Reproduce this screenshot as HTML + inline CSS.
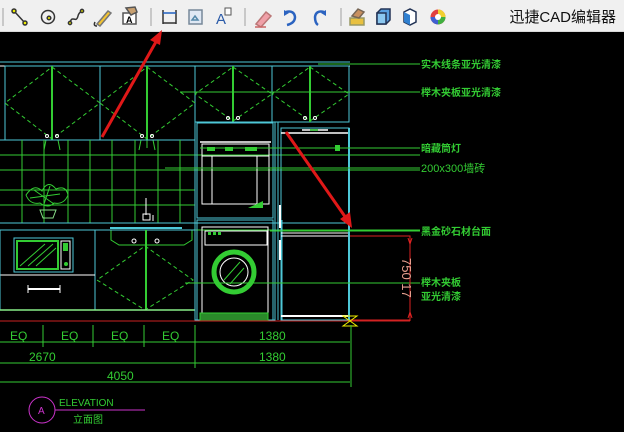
<!DOCTYPE html>
<html><head><meta charset="utf-8"><style>
html,body{margin:0;padding:0;width:624px;height:432px;overflow:hidden;background:#000}
.tb{position:absolute;left:0;top:0;width:624px;height:31px;background:#f0f0f0;border-bottom:1px solid #d8d8d8}
.title{position:absolute;right:8px;top:6px;font:15px "Liberation Sans","Noto Sans CJK SC",sans-serif;color:#111}
svg{position:absolute;left:0;top:0}
</style></head><body>
<div class="tb"></div>
<div class="title">迅捷CAD编辑器</div>
<svg width="624" height="432" viewBox="0 0 624 432" font-family="Liberation Sans, Noto Sans CJK SC, sans-serif">
<g stroke-width="1.5" fill="none">
<line x1="3" y1="8" x2="3" y2="26" stroke="#bbb"/>
<line x1="14" y1="11" x2="25" y2="23" stroke="#333"/><circle cx="14" cy="11" r="2" stroke="#333" fill="#ee0"/><circle cx="25" cy="23" r="2" stroke="#333" fill="#ee0"/>
<circle cx="48" cy="17" r="6.5" stroke="#333"/><circle cx="49" cy="18" r="1.8" fill="#ee0" stroke="#333"/>
<path d="M70 23 C72 14 76 24 78 16 C79 12 81 12 82 11" stroke="#333"/><circle cx="70" cy="23" r="1.6" fill="#ee0" stroke="#333"/><circle cx="82" cy="11" r="1.6" fill="#ee0" stroke="#333"/>
<path d="M97 24 L108 11 L111 13 L100 26 Z" fill="#f4c430" stroke="#777"/><path d="M95 22 q-2 4 2 4" stroke="#333"/>
<rect x="123" y="13" width="13" height="11" fill="#fff" stroke="#555"/><path d="M126 8 l9 -1 l2 5 l-6 3z" fill="#c8a070" stroke="#555"/><text x="126" y="23" font-size="9" fill="#000" stroke="none" font-weight="bold">A</text>
<line x1="151" y1="8" x2="151" y2="26" stroke="#bbb"/>
<line x1="163" y1="10" x2="163" y2="24" stroke="#333"/><line x1="176" y1="10" x2="176" y2="24" stroke="#333"/><line x1="163" y1="13" x2="176" y2="13" stroke="#2060c0"/><line x1="163" y1="23" x2="176" y2="23" stroke="#333"/>
<rect x="189" y="10" width="13" height="14" fill="#dfe8f4" stroke="#789"/><path d="M192 20 l6 0 l-3 -4z" stroke="#58a"/>
<text x="216" y="24" font-size="15" fill="#2a5aa8" stroke="none">A</text><rect x="225" y="8" width="6" height="7" fill="#fff" stroke="#555" stroke-width="1"/>
<line x1="245" y1="8" x2="245" y2="26" stroke="#bbb"/>
<path d="M256 24 L266 12 L271 16 L261 27 Z" fill="#f0a0a8" stroke="#b77"/><line x1="255" y1="27" x2="266" y2="27" stroke="#c66"/>
<path d="M286 12 q8 -2 9 5 q0 6 -8 8" stroke="#2b63c0" stroke-width="2.5"/><path d="M284 10 l0 6 l5 -3z" fill="#2b63c0" stroke="none"/>
<path d="M324 12 q-8 -2 -9 5 q0 6 3 8" stroke="#2b63c0" stroke-width="2.5"/><path d="M326 10 l0 6 l-5 -3z" fill="#2b63c0" stroke="none"/>
<line x1="341" y1="8" x2="341" y2="26" stroke="#bbb"/>
<rect x="350" y="18" width="14" height="7" fill="#e8c040" stroke="#996"/><path d="M352 16 l6 -7 l6 3 l-5 6z" fill="#c89060" stroke="#765"/>
<path d="M377 13 l4 -4 h9 v11 l-4 4 h-9z" fill="#5aa0e0" stroke="#235"/><rect x="377" y="13" width="9" height="11" fill="#8cc8f0" stroke="#235"/>
<path d="M404 12 l6 -3 l6 3 v10 l-6 3 l-6 -3z" fill="#fff" stroke="#235"/><path d="M404 12 l6 3 v10 l-6 -3z" fill="#3080d0"/>
<circle cx="438" cy="17" r="7.5" fill="#e04040" stroke="none"/><path d="M438 17 L438 9.5 A7.5 7.5 0 0 1 445.5 17z" fill="#f0d030" stroke="none"/><path d="M438 17 L445.5 17 A7.5 7.5 0 0 1 438 24.5z" fill="#40b040" stroke="none"/><path d="M438 17 L438 24.5 A7.5 7.5 0 0 1 430.5 17z" fill="#4060d0" stroke="none"/><circle cx="438" cy="17" r="3" fill="#fff" stroke="none"/>
</g>

<g fill="none" stroke-width="1">
<line x1="0" y1="62" x2="350" y2="62" stroke="#4ec8d8"/>
<line x1="0" y1="66" x2="350" y2="66" stroke="#fff"/>
<line x1="318" y1="64" x2="420" y2="64" stroke="#3c3"/>
<rect x="5" y="66" width="95" height="74" stroke="#4ec8d8"/>
<rect x="100" y="66" width="95" height="74" stroke="#4ec8d8"/>
<rect x="195" y="66" width="77" height="56" stroke="#4ec8d8"/>
<rect x="272" y="66" width="77" height="56" stroke="#4ec8d8"/>
<g stroke="#3c3" stroke-dasharray="4 3">
<path d="M52 67 L100 103 L52 139 L5 103 Z"/><path d="M147 67 L195 103 L147 139 L100 103 Z"/>
<path d="M233 67 L272 94 L233 121 L195 94 Z"/><path d="M310 67 L349 94 L310 121 L272 94 Z"/>
</g>
<g stroke="#3c3" stroke-width="2"><line x1="52" y1="66" x2="52" y2="140"/><line x1="147" y1="66" x2="147" y2="140"/><line x1="233" y1="66" x2="233" y2="122"/><line x1="310" y1="66" x2="310" y2="122"/></g>
<line x1="180" y1="92" x2="420" y2="92" stroke="#3c3"/>
<g stroke="#fff"><circle cx="47" cy="136" r="1.5"/><circle cx="57" cy="136" r="1.5"/><circle cx="142" cy="136" r="1.5"/><circle cx="152" cy="136" r="1.5"/><circle cx="228" cy="118" r="1.5"/><circle cx="238" cy="118" r="1.5"/><circle cx="305" cy="118" r="1.5"/><circle cx="315" cy="118" r="1.5"/></g>
<g stroke="#3c3"><path d="M46 140 l-2 10 M58 140 l2 10 M141 140 l-2 10 M153 140 l2 10 M147 140 v8"/></g>
<line x1="0" y1="140" x2="195" y2="140" stroke="#4ec8d8"/>
<g stroke="#3c3">
<line x1="0" y1="155" x2="420" y2="155"/><line x1="0" y1="170" x2="420" y2="170"/><line x1="0" y1="190" x2="195" y2="190"/><line x1="0" y1="205" x2="195" y2="205"/>
<line x1="22" y1="140" x2="22" y2="223"/><line x1="44" y1="140" x2="44" y2="223"/><line x1="68" y1="140" x2="68" y2="223"/><line x1="90" y1="140" x2="90" y2="223"/><line x1="112" y1="140" x2="112" y2="223"/><line x1="135" y1="140" x2="135" y2="223"/><line x1="158" y1="140" x2="158" y2="223"/><line x1="180" y1="140" x2="180" y2="223"/>
</g>
<g stroke="#3c3"><path d="M26 195 q8 -12 16 -4 q6 -12 14 -2 q10 -4 12 6 q-4 10 -14 8 q-6 6 -14 0 q-10 2 -14 -8z"/><path d="M30 198 l30 -4 M34 190 l20 14 M50 186 l-6 18"/><path d="M40 210 h16 l-3 8 h-10z" stroke="#8d8"/></g>
<line x1="0" y1="223" x2="350" y2="223" stroke="#4ec8d8"/>
<line x1="0" y1="230" x2="195" y2="230" stroke="#4ec8d8"/>
<line x1="110" y1="228" x2="182" y2="228" stroke="#4ec8d8" stroke-width="2"/>
<line x1="170" y1="230" x2="420" y2="230" stroke="#3c3"/>
<g stroke="#fff"><line x1="146" y1="198" x2="146" y2="215"/><rect x="143" y="214" width="7" height="6"/><line x1="153" y1="215" x2="153" y2="221"/></g>
<path d="M111 230 v10 l8 5 h65 l8 -5 v-10" stroke="#3c3"/>
<g stroke="#fff"><circle cx="134" cy="241" r="2"/><circle cx="157" cy="241" r="2"/></g>
<line x1="95" y1="230" x2="95" y2="310" stroke="#4ec8d8"/>
<line x1="0" y1="275" x2="95" y2="275" stroke="#fff"/>
<rect x="0" y="230" width="195" height="80" stroke="#4ec8d8"/>
<line x1="28" y1="289" x2="60" y2="289" stroke="#fff" stroke-width="2"/><path d="M28 285 v8 M60 285 v8" stroke="#fff"/>
<rect x="14" y="238" width="59" height="34" stroke="#4ec8d8"/>
<rect x="17" y="241" width="41" height="28" stroke="#3c3" stroke-width="2"/>
<g stroke="#3c3"><path d="M20 266 l25 -22 M28 266 l25 -22 M36 266 l20 -18"/></g>
<rect x="61" y="241" width="9" height="28" stroke="#fff"/><rect x="63" y="243" width="5" height="8" fill="#3c3" stroke="none"/><circle cx="66" cy="264" r="2" fill="#3c3" stroke="none"/>
<path d="M145 246 L193 280 L145 310 L97 280 Z" stroke="#3c3" stroke-dasharray="4 3"/>
<line x1="146" y1="230" x2="146" y2="310" stroke="#3c3" stroke-width="2"/>
<line x1="0" y1="310" x2="195" y2="310" stroke="#8e8" stroke-width="1.5"/>
<rect x="195" y="122" width="80" height="198" stroke="#4ec8d8"/>
<rect x="197" y="123" width="76" height="95" stroke="#4ec8d8"/>
<line x1="200" y1="142" x2="271" y2="142" stroke="#fff" stroke-width="1.5"/>
<rect x="202" y="144" width="67" height="12" stroke="#fff"/>
<rect x="202" y="144" width="67" height="60" stroke="#fff"/>
<rect x="212" y="156" width="45" height="48" stroke="#fff"/>
<g fill="#3c3" stroke="none"><rect x="207" y="147" width="8" height="4"/><rect x="225" y="147" width="8" height="4"/><rect x="245" y="147" width="12" height="4"/><path d="M248 208 l15 -7 v7z"/></g>
<rect x="197" y="220" width="76" height="100" stroke="#4ec8d8"/>
<rect x="202" y="227" width="66" height="88" stroke="#fff"/>
<path d="M205 231 h62 v14 h-62z" stroke="#fff"/>
<g fill="#3c3" stroke="none"><rect x="208" y="232" width="3" height="3"/><rect x="213" y="232" width="3" height="3"/><rect x="218" y="232" width="3" height="3"/></g>
<circle cx="234" cy="272" r="20" stroke="#3c3" stroke-width="5"/>
<circle cx="234" cy="272" r="14" stroke="#fff"/>
<path d="M224 280 l16 -18 M230 284 l14 -16" stroke="#3c3"/>
<rect x="200" y="313" width="68" height="8" fill="#2a8a2a" stroke="#3c3"/>
<line x1="278" y1="122" x2="278" y2="320" stroke="#4ec8d8"/>
<line x1="282" y1="220" x2="282" y2="320" stroke="#4ec8d8"/>
<rect x="281" y="128" width="68" height="192" stroke="#4ec8d8"/>
<line x1="281" y1="133" x2="349" y2="133" stroke="#fff" stroke-width="1.5"/>
<line x1="302" y1="130" x2="328" y2="130" stroke="#fff" stroke-width="1.5"/><line x1="310" y1="130" x2="318" y2="130" stroke="#3c3" stroke-width="1.5"/>
<line x1="281" y1="233" x2="349" y2="233" stroke="#fff"/><line x1="281" y1="236" x2="349" y2="236" stroke="#fff"/>
<line x1="281" y1="316" x2="349" y2="316" stroke="#fff" stroke-width="2"/>
<line x1="280" y1="205" x2="280" y2="228" stroke="#fff" stroke-width="2"/><line x1="280" y1="240" x2="280" y2="260" stroke="#fff" stroke-width="2"/>
<rect x="335" y="145" width="5" height="6" fill="#3c3" stroke="none"/>
<line x1="349" y1="128" x2="349" y2="320" stroke="#4ec8d8" stroke-width="2"/>
<line x1="200" y1="148" x2="420" y2="148" stroke="#3c3"/>
<line x1="165" y1="168" x2="420" y2="168" stroke="#3c3"/>
<line x1="270" y1="231" x2="420" y2="231" stroke="#3c3"/>
<line x1="185" y1="283" x2="420" y2="283" stroke="#3c3"/>
<line x1="0" y1="321" x2="410" y2="321" stroke="#c22"/>
<path d="M350 236 H410 V321 M350 320 H410" stroke="#d22"/>
<path d="M408 238 l2 6 l2 -6 M408 318 l2 -6 l2 6" stroke="#d22"/>
<text transform="translate(402,258) rotate(90)" font-size="13" fill="#e8a090" stroke="none">750 17</text>
<path d="M343 316 h14 l-14 10 h14 z" stroke="#ee0"/>
<g stroke="#3c3">
<line x1="0" y1="342" x2="350" y2="342"/><line x1="0" y1="363" x2="350" y2="363"/><line x1="0" y1="382" x2="350" y2="382"/>
<line x1="43" y1="325" x2="43" y2="347"/><line x1="93" y1="325" x2="93" y2="347"/><line x1="144" y1="325" x2="144" y2="347"/><line x1="195" y1="325" x2="195" y2="368"/><line x1="351" y1="325" x2="351" y2="387"/>
</g>
<g fill="#3c3" stroke="none" font-size="12">
<text x="10" y="340">EQ</text><text x="61" y="340">EQ</text><text x="111" y="340">EQ</text><text x="162" y="340">EQ</text><text x="259" y="340">1380</text>
<text x="29" y="361">2670</text><text x="259" y="361">1380</text><text x="107" y="380">4050</text>
<text x="59" y="406" font-size="10">ELEVATION</text><text x="73" y="423" font-size="10">立面图</text>
</g>
<circle cx="42" cy="410" r="13" stroke="#c3c"/><text x="38" y="414" font-size="10" fill="#c3c" stroke="none">A</text>
<line x1="55" y1="410" x2="145" y2="410" stroke="#c3c"/>
<g fill="#3c3" stroke="none" font-size="10" font-weight="bold">
<text x="421" y="68">实木线条亚光清漆</text><text x="421" y="96">榉木夹板亚光清漆</text>
<text x="421" y="152">暗藏筒灯</text><text x="421" y="172" font-size="11" font-weight="normal">200x300墙砖</text>
<text x="421" y="235">黑金砂石材台面</text><text x="421" y="286">榉木夹板</text><text x="421" y="300">亚光清漆</text>
</g>
<g stroke="#e01818" stroke-width="3"><line x1="102" y1="137" x2="157" y2="40"/><line x1="286" y1="132" x2="346" y2="218"/></g>
<path d="M162 30 L150 40 L160 45 Z" fill="#e01818"/>
<path d="M352 228 L340 219 L350 212 Z" fill="#e01818"/>
</g>
</svg>
</body></html>
